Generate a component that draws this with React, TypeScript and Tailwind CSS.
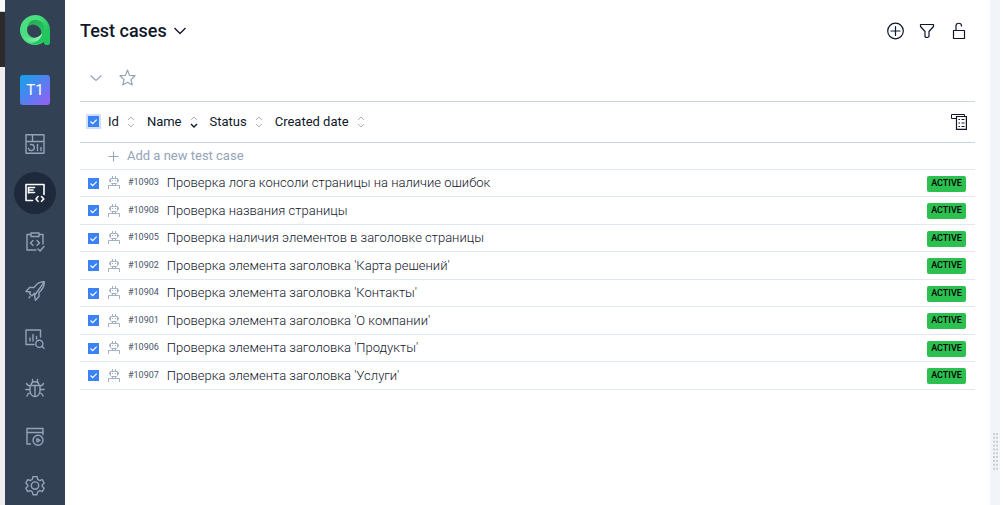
import type { ReactNode } from 'react';

type TestCase = { id: number; name: string; status: string };

const testCases: TestCase[] = [
  { id: 10903, name: 'Проверка лога консоли страницы на наличие ошибок', status: 'ACTIVE' },
  { id: 10908, name: 'Проверка названия страницы', status: 'ACTIVE' },
  { id: 10905, name: 'Проверка наличия элементов в заголовке страницы', status: 'ACTIVE' },
  { id: 10902, name: "Проверка элемента заголовка 'Карта решений'", status: 'ACTIVE' },
  { id: 10904, name: "Проверка элемента заголовка 'Контакты'", status: 'ACTIVE' },
  { id: 10901, name: "Проверка элемента заголовка 'О компании'", status: 'ACTIVE' },
  { id: 10906, name: "Проверка элемента заголовка 'Продукты'", status: 'ACTIVE' },
  { id: 10907, name: "Проверка элемента заголовка 'Услуги'", status: 'ACTIVE' },
];

function Icon({ size = 20, width = 1.4, children }: { size?: number; width?: number; children: ReactNode }) {
  return (
    <svg
      width={size}
      height={size}
      viewBox={`0 0 ${size} ${size}`}
      fill="none"
      stroke="currentColor"
      strokeWidth={width}
      strokeLinecap="round"
      strokeLinejoin="round"
      aria-hidden="true"
    >
      {children}
    </svg>
  );
}

function Logo() {
  return (
    <svg width="30" height="30" viewBox="0 0 30 30" aria-hidden="true">
      <defs>
        <linearGradient id="ring" x1="0" y1="0" x2="1" y2="0.3">
          <stop offset="0" stopColor="#4ade80" />
          <stop offset="0.6" stopColor="#4ade80" />
          <stop offset="1" stopColor="#22c55e" />
        </linearGradient>
        <linearGradient id="sweep" x1="0" y1="0" x2="1" y2="0">
          <stop offset="0" stopColor="#4ade80" />
          <stop offset="1" stopColor="#9af3ba" />
        </linearGradient>
        <linearGradient id="arc" x1="0" y1="0" x2="0.8" y2="1">
          <stop offset="0" stopColor="#2ba655" />
          <stop offset="1" stopColor="#22c55e" />
        </linearGradient>
      </defs>
      <path
        fill="url(#ring)"
        fillRule="evenodd"
        d="M15 0A15 15 0 0 1 30 15V27A3 3 0 0 1 24 27V27A15 15 0 1 1 15 0ZM15 6.800A8 8 0 1 0 15 22.800A8 8 0 1 0 15 6.800Z"
      />
      <path fill="url(#arc)" d="M7.500 12C8.500 5 17 2 22.500 8C25.500 12 25 17 21.500 20.500L20.600 20.500A8 8 0 0 0 7.500 12Z" />
      <path fill="url(#sweep)" d="M2 19C7 25 16 25 22.300 18.500C22 24 18 27 11 27C6 26.500 3 24 2 19Z" />
      <path fill="#22c55e" d="M22.500 18C24.500 15 27 13 30 15V27A3 3 0 0 1 24 27V24.500C20 28 15 30 11 29C17 28 21 24 22.500 18Z" />
    </svg>
  );
}

const navGroups: { label: string; active?: boolean; icon: ReactNode }[][] = [
  [
    {
      label: 'Dashboards',
      icon: (
        <Icon>
          <path d="M1 .8H19V19.200H1ZM1 7.500H19M7.500 .8V7.500M5.500 10.500H6A3 3 0 1 1 3.500 14.500M12.500 10.500V16.500M16 13.500V16.500" />
        </Icon>
      ),
    },
    {
      label: 'Test cases',
      active: true,
      icon: (
        <Icon width={1.6}>
          <path d="M7.500 17.500H1V1.500H19V11.500M3.500 4.500H9.500M3.500 7H8M3.500 9.500H9.500M3.500 4.500V10M13 13.500L11 16L13 18.300M16.500 13.500L18.800 16L16.500 18.300" />
        </Icon>
      ),
    },
    {
      label: 'Test plans',
      icon: (
        <Icon>
          <path d="M6 2.500H2V18H11M14 2.500H18V12M6 1H14V4.500H6ZM8 8.500L5.500 11L8 13.300M12 8.500L14.500 11L12 13.300M13 17L15 19L19 14.500" />
        </Icon>
      ),
    },
    {
      label: 'Launches',
      icon: (
        <Icon>
          <path d="M19.300 .8C15 .3 11.500 3 9 6.500H4.500L1 10.500L5.500 11L4.700 13L7 14.800L9.500 12.300M4 16.800L5 15.800M9.500 14.500L10.500 19.300L14 15.500V11.500C17.500 8.500 19.500 5 19.300 .8Z" />
        </Icon>
      ),
    },
  ],
  [
    {
      label: 'Analytics',
      icon: (
        <Icon>
          <path d="M9 15.500H1V1H15.500V8M5 9V12M8 5.500V12M11.500 7.500V10M16.800 17.300L19 19.300" />
          <circle cx="14.300" cy="14.800" r="3.600" />
        </Icon>
      ),
    },
    {
      label: 'Defects',
      icon: (
        <Icon>
          <path d="M5 7.500H15V13A5 5.500 0 0 1 5 13ZM6 7.500C6 2.500 14 2.500 14 7.500M10 7.500V18.500M7.500 4V1.500M12.500 4V1.500M5 8L2.500 7L1.500 5.500M15 8L17.500 7L18.500 5.500M5 11.500H.8M15 11.500H19.200M5.500 14.500L3 16L2 18M14.500 14.500L17 16L18 18" />
        </Icon>
      ),
    },
    {
      label: 'Jobs',
      icon: (
        <Icon>
          <path d="M5.500 17H2V1.500H18V7.500M2 5.500H18M12 11.500V15L15 13.300Z" />
          <circle cx="13" cy="13.300" r="5" />
        </Icon>
      ),
    },
    {
      label: 'Settings',
      icon: (
        <Icon>
          <path d="M8 .5H12L12.700 3.300L14.700 4.500L17.300 3.700L19.200 7L17.200 8.900V10.300L19.200 12.200L17.300 15.500L14.700 14.700L12.700 15.800L12 18.700H8L7.300 15.800L5.300 14.700L2.700 15.500L.8 12.200L2.800 10.300V8.900L.8 7L2.700 3.700L5.300 4.500L7.300 3.300Z" />
          <circle cx="10" cy="9.600" r="3.700" />
        </Icon>
      ),
    },
  ],
];

function Checkbox({ label, focused = false }: { label: string; focused?: boolean }) {
  return (
    <label className="grid size-[11px]">
      <input
        type="checkbox"
        defaultChecked
        aria-label={label}
        className={
          focused
            ? 'peer col-start-1 row-start-1 size-[11px] appearance-none bg-white ring-2 ring-[#cfe0fd] outline-none checked:bg-[#3b82f6]'
            : 'peer col-start-1 row-start-1 size-[11px] appearance-none border border-[#94a3b8] bg-white checked:border-[#3b82f6] checked:bg-[#3b82f6]'
        }
      />
      <svg
        className="pointer-events-none invisible col-start-1 row-start-1 peer-checked:visible"
        width="11"
        height="11"
        viewBox="0 0 11 11"
        fill="none"
        stroke="#fff"
        strokeWidth="1.200"
        aria-hidden="true"
      >
        <path d="M2.500 5.500L4.700 7.600L8.700 3.600" />
      </svg>
    </label>
  );
}

function SortButton({ label, descending = false }: { label: string; descending?: boolean }) {
  return (
    <button type="button" className="flex items-center gap-2">
      {label}
      <svg width="8" height="14" viewBox="0 0 8 14" fill="none" aria-hidden="true">
        <path d="M1 5L4 2L7 5" stroke="#b4b4b4" />
        <path
          d="M1 9L4 12L7 9"
          stroke={descending ? '#0f172a' : '#b4b4b4'}
          strokeWidth={descending ? 1.4 : 1}
        />
      </svg>
    </button>
  );
}

function RobotIcon() {
  return (
    <svg width="12" height="14" viewBox="0 0 12 14" fill="none" stroke="#a3afc2" aria-hidden="true">
      <path d="M4.500 0V2M7.500 0V2M2.500 2.500H9.500V6.500L8.500 7.500H3.500L2.500 6.500ZM1.500 3.500V5.500M10.500 3.500V5.500M4.500 4V5M7.500 4V5M4.500 7.500V9M7.500 7.500V9M.5 13V9.500H3.500M11.500 13V9.500H8.500M3 9.500H9" />
    </svg>
  );
}

export default function App() {
  return (
    <div className="flex min-h-screen bg-white font-['Roboto','Liberation_Sans',sans-serif] text-[13px] text-[#0f172a]">
      <div className="flex w-[5px] flex-col bg-[#efefef]" aria-hidden="true">
        <div className="h-3 border-b border-[#cfcfcf] bg-[#f8fafc]" />
        <div className="h-[55px] bg-[#2b2b2b]" />
      </div>

      <aside className="flex w-[60px] shrink-0 flex-col items-center bg-[#334155] pt-[15px] text-[#94a3b8]">
        <a href="#home" aria-label="Home">
          <Logo />
        </a>
        <a
          href="#project"
          className="mt-[30px] flex size-[30px] items-center justify-center rounded-[3px] bg-[linear-gradient(135deg,#0ea5e9,#5b7cf0_55%,#9b5cf6)] text-[15px] text-white"
        >
          T1
        </a>
        <nav className="mt-[18px] flex flex-col gap-1.5">
          {navGroups.map((group) => (
            <div key={group[0].label} className="flex flex-col gap-[7px]">
              {group.map((item) => (
                <a
                  key={item.label}
                  href="#section"
                  aria-label={item.label}
                  className={
                    item.active
                      ? 'flex size-[42px] items-center justify-center rounded-full bg-[#1e293b] text-white'
                      : 'flex size-[42px] items-center justify-center rounded-full'
                  }
                >
                  {item.icon}
                </a>
              ))}
            </div>
          ))}
        </nav>
      </aside>

      <main className="min-w-0 flex-1 px-[15px]">
        <header className="flex h-[62px] items-center justify-between pr-[7px]">
          <h1>
            <button type="button" className="flex items-center gap-[7px] text-lg font-medium">
              Test cases
              <svg width="12" height="8" viewBox="0 0 12 8" fill="none" stroke="currentColor" strokeWidth="1.300" aria-hidden="true">
                <path d="M.5 1L6 6.500L11.500 1" />
              </svg>
            </button>
          </h1>
          <div className="flex items-center gap-3.5">
            <button type="button" aria-label="Create">
              <Icon size={18} width={1.2}>
                <circle cx="9.500" cy="9" r="7.800" />
                <path d="M9.500 4.500V13.500M5 9H14" />
              </Icon>
            </button>
            <button type="button" aria-label="Filter">
              <Icon size={18} width={1.2}>
                <path d="M2.500 2.500H15.500V4.500L11 9.500V14.500L9.500 15.500H8L7 14.500V9.500L2.500 4.500Z" />
              </Icon>
            </button>
            <button type="button" aria-label="Unlock">
              <Icon size={18} width={1.2}>
                <path d="M3.500 8.500H14.500V16.500H3.500ZM6 8.500V4A2.700 2.700 0 0 1 11.500 4" />
              </Icon>
            </button>
          </div>
        </header>

        <div className="flex h-[39px] items-start gap-4 pt-[7px] pl-2.5 text-[#94a3b8]">
          <button type="button" aria-label="Expand" className="flex h-[18px] items-center">
            <svg width="12" height="8" viewBox="0 0 12 8" fill="none" stroke="currentColor" strokeWidth="1.200" aria-hidden="true">
              <path d="M.5 1.500L6 6.500L11.500 1.500" />
            </svg>
          </button>
          <button type="button" aria-label="Favourite">
            <Icon size={18} width={1.2}>
              <path d="M9.500 1L11.500 6.400L17 6.700L13 10.600L14.200 16L9.500 13.200L4.800 16L6 10.600L2 6.700L7.500 6.400Z" />
            </Icon>
          </button>
        </div>

        <table className="w-full border-separate border-spacing-0">
          <thead>
            <tr>
              <th className="h-[42px] w-[28px] border-y border-[#cbd5e1] p-0 pb-px pl-2">
                <Checkbox label="Select all test cases" focused />
              </th>
              <th colSpan={2} className="border-y border-[#cbd5e1] p-0 font-normal">
                <div className="flex items-center gap-3">
                  <SortButton label="Id" />
                  <SortButton label="Name" descending />
                  <SortButton label="Status" />
                  <SortButton label="Created date" />
                </div>
              </th>
              <th className="border-y border-[#cbd5e1] p-0 pr-2 pb-px">
                <button type="button" aria-label="Configure columns" className="ml-auto block">
                  <svg width="16" height="16" viewBox="0 0 16 16" fill="none" stroke="currentColor" aria-hidden="true">
                    <path d="M5 4.500H.5V.5H13.500V2.500" />
                    <path strokeWidth="1.200" d="M5.500 2.500H15.400V15.400H5.500Z" />
                    <path d="M7.500 5.500H9M10.500 5.500H13.500M7.500 9H9M10.500 9H13.500M7.500 12.500H9M10.500 12.500H13.500" />
                  </svg>
                </button>
              </th>
            </tr>
          </thead>
          <tbody>
            <tr>
              <td colSpan={4} className="h-[27px] border-b border-[#e2e8f0] p-0 pl-7">
                <button type="button" className="flex items-center gap-2 text-[#94a3b8]">
                  <svg width="11" height="11" viewBox="0 0 11 11" stroke="currentColor" aria-hidden="true">
                    <path d="M5.500 .5V10.500M.5 5.500H10.500" />
                  </svg>
                  Add a new test case
                </button>
              </td>
            </tr>
          </tbody>
          <tbody>
            {testCases.map((testCase) => (
              <tr key={testCase.id} className="group">
                <td className="border-b border-[#e2e8f0] p-0 pl-2 group-odd:h-[27px] group-even:h-[28px]">
                  <Checkbox label={`Select #${testCase.id}`} />
                </td>
                <td className="w-[20px] border-b border-[#e2e8f0] p-0">
                  <RobotIcon />
                </td>
                <td className="border-b border-[#e2e8f0] p-0">
                  <a href="#case" className="flex items-center gap-2">
                    <span className="text-[9px] text-[#475569]">#{testCase.id}</span>
                    <span className="font-light">{testCase.name}</span>
                  </a>
                </td>
                <td className="w-[60px] border-b border-[#e2e8f0] p-0 pt-px pr-[9px]">
                  <span className="ml-auto flex h-4 w-[39px] items-center justify-center rounded-[2px] bg-[#2bc050] text-[9px] font-medium text-black">
                    {testCase.status}
                  </span>
                </td>
              </tr>
            ))}
          </tbody>
        </table>
      </main>

      <div className="mr-[3px] flex w-2.5 flex-col items-center bg-[#f1f5f9] pt-[433px]" aria-hidden="true">
        <svg width="5" height="37" viewBox="0 0 5 37" stroke="#cbcfd5" strokeWidth="2" strokeDasharray="2 1.850">
          <path d="M1 0V37M4 0V37" />
        </svg>
      </div>
    </div>
  );
}
